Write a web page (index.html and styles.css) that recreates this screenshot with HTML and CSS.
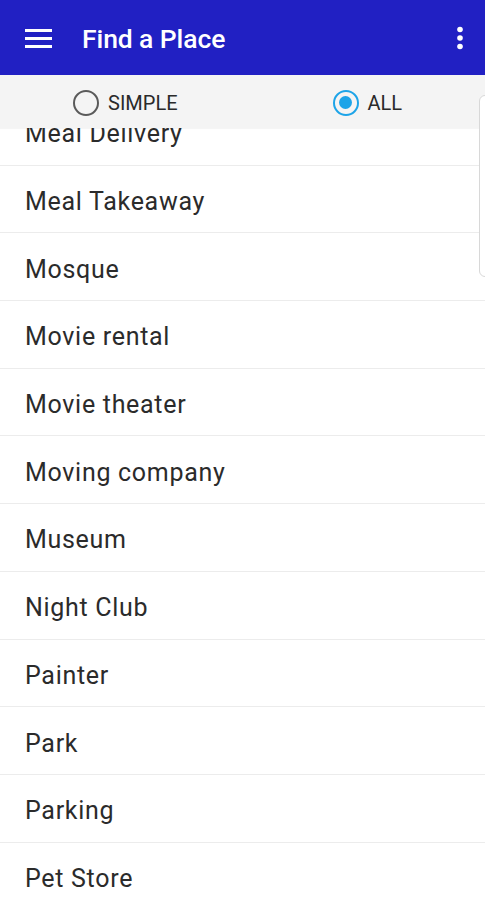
FILE: index.html
```html
<!DOCTYPE html>
<html lang="en">

<head>
  <meta charset="UTF-8">
  <title>Find a Place</title>
  <meta name="viewport" content="width=device-width, initial-scale=1.0">
  <link rel="stylesheet" href="styles.css">
</head>

<body>

  <div class="app">
    <header class="toolbar">
      <div class="menu-button">
        <svg width="27" height="20" viewBox="0 0 27 20">
          <rect x="0" y="1" width="27" height="3" fill="#fff" />
          <rect x="0" y="9" width="27" height="3" fill="#fff" />
          <rect x="0" y="17" width="27" height="3" fill="#fff" />
        </svg>
      </div>
      <h1 class="title">Find a Place</h1>
      <div class="more-button">
        <svg width="8" height="26" viewBox="0 0 8 26">
          <circle cx="4" cy="4.5" r="2.8" fill="#fff" />
          <circle cx="4" cy="13" r="2.8" fill="#fff" />
          <circle cx="4" cy="21.5" r="2.8" fill="#fff" />
        </svg>
      </div>
    </header>

    <div class="filter-bar">
      <label class="radio-option">
        <span class="radio"></span>
        SIMPLE
      </label>
      <label class="radio-option">
        <span class="radio checked"></span>
        ALL
      </label>
    </div>

    <div class="list-wrap">
      <ul class="place-list">
        <li>Meal Delivery</li>
        <li>Meal Takeaway</li>
        <li>Mosque</li>
        <li>Movie rental</li>
        <li>Movie theater</li>
        <li>Moving company</li>
        <li>Museum</li>
        <li>Night Club</li>
        <li>Painter</li>
        <li>Park</li>
        <li>Parking</li>
        <li>Pet Store</li>
        <li>Pharmacy</li>
      </ul>
    </div>

    <div class="scroll-thumb"></div>
  </div>

</body>

</html>
```

FILE: styles.css
```css
* {
  box-sizing: border-box;
}

body {
  margin: 0;
  font-family: Roboto, "Noto Sans", Arial, sans-serif;
  background: #fff;
}

.app {
  width: 485px;
  height: 900px;
  overflow: hidden;
  display: flex;
  flex-direction: column;
  position: relative;
}

.toolbar {
  height: 75px;
  background: #2120c3;
  display: flex;
  align-items: center;
  padding: 0 25px;
  flex-shrink: 0;
}

.menu-button {
  display: flex;
  align-items: center;
  width: 57px;
}

.title {
  flex: 1;
  margin: 0;
  color: #fff;
  font-size: 26.5px;
  font-weight: 500;
  letter-spacing: -0.1px;
  margin-top: 1px;
}

.more-button {
  display: flex;
  align-items: center;
  margin-right: -4px;
  margin-top: 1px;
}

.filter-bar {
  height: 53px;
  background: #f4f4f4;
  display: flex;
  align-items: center;
  padding-top: 3px;
  position: relative;
  z-index: 1;
  flex-shrink: 0;
  box-shadow: 0 1px 1px rgba(0, 0, 0, 0.04);
}

.radio-option {
  display: flex;
  align-items: center;
  gap: 9px;
  font-size: 20px;
  color: #2a2a2a;
}

.radio-option:first-child {
  margin-left: 73px;
}

.radio-option:last-child {
  margin-left: 155px;
}

.radio {
  width: 26px;
  height: 26px;
  border: 2px solid #5a5a5a;
  border-radius: 50%;
  display: inline-block;
  position: relative;
}

.radio.checked {
  border: 2.5px solid #1da4e8;
}

.radio.checked::after {
  content: "";
  position: absolute;
  left: 4px;
  top: 4px;
  width: 13px;
  height: 13px;
  border-radius: 50%;
  background: #1da4e8;
}

.list-wrap {
  flex: 1;
  overflow: hidden;
}

.place-list {
  list-style: none;
  margin: -30px 0 0;
  padding: 0;
}

.place-list li {
  height: 67.7px;
  display: flex;
  align-items: center;
  padding-left: 25px;
  padding-top: 5px;
  font-size: 25px;
  letter-spacing: 0.7px;
  color: #2b2b2b;
  border-bottom: 1px solid #ececec;
}

.scroll-thumb {
  position: absolute;
  right: -6px;
  top: 95px;
  z-index: 2;
  width: 12px;
  height: 182px;
  border: 1px solid #d8d8d8;
  border-radius: 6px;
  background: #fff;
}
```
